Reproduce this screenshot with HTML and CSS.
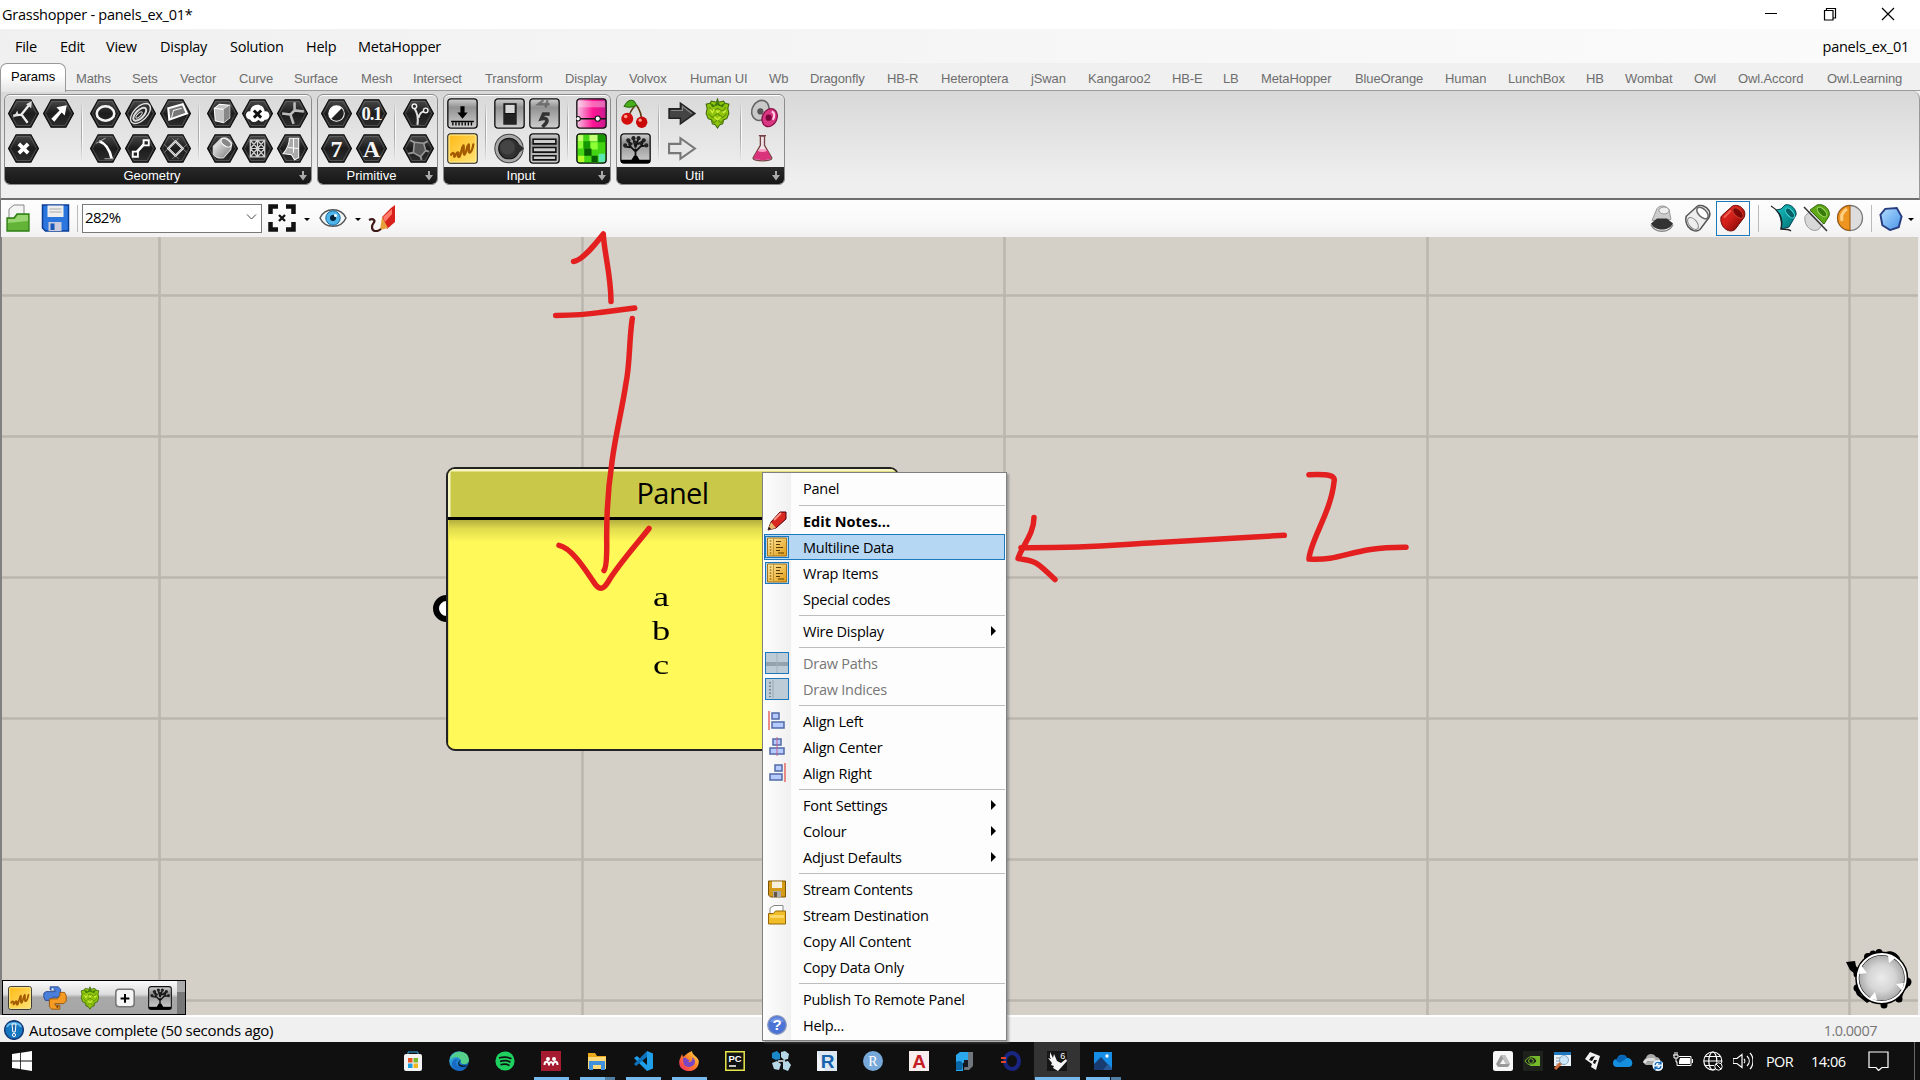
FILE: index.html
```html
<!DOCTYPE html>
<html lang="en">
<head>
<meta charset="utf-8">
<title>Grasshopper - panels_ex_01*</title>
<link rel="stylesheet" href="styles.css">
</head>
<body>
<svg class="defs" width="0" height="0" aria-hidden="true">
  <defs>
    <linearGradient id="gHex" x1="0" y1="0" x2="0" y2="1"><stop offset="0" stop-color="#4a4a4a"/><stop offset=".5" stop-color="#1c1c1c"/><stop offset="1" stop-color="#2e2e2e"/></linearGradient>
    <linearGradient id="gBtn" x1="0" y1="0" x2="0" y2="1"><stop offset="0" stop-color="#d0d0d0"/><stop offset=".3" stop-color="#929292"/><stop offset="1" stop-color="#cfcfcf"/></linearGradient>
    <linearGradient id="gWhite" x1="0" y1="0" x2="1" y2="1"><stop offset="0" stop-color="#fff"/><stop offset="1" stop-color="#777"/></linearGradient>
    <linearGradient id="gYellow" x1="0" y1="0" x2="1" y2="1"><stop offset="0" stop-color="#ffb914"/><stop offset="1" stop-color="#ffe477"/></linearGradient>
    <linearGradient id="gPink" x1="0" y1="0" x2="1" y2="0"><stop offset="0" stop-color="#f4c3e4"/><stop offset=".55" stop-color="#ff1493"/><stop offset="1" stop-color="#c71a8e"/></linearGradient>
    <linearGradient id="gRed" x1="0" y1="0" x2="1" y2="1"><stop offset="0" stop-color="#d22"/><stop offset=".45" stop-color="#d3211a"/><stop offset="1" stop-color="#6a0000"/></linearGradient>
    <linearGradient id="gTeal" x1="0" y1="0" x2="1" y2="1"><stop offset="0" stop-color="#19c4c4"/><stop offset="1" stop-color="#006b70"/></linearGradient>
    <linearGradient id="gBlue" x1="0" y1="0" x2="1" y2="1"><stop offset="0" stop-color="#b4dcff"/><stop offset="1" stop-color="#4795e8"/></linearGradient>
    <linearGradient id="gGold" x1="0" y1="0" x2="1" y2="1"><stop offset="0" stop-color="#ffe9a0"/><stop offset="1" stop-color="#e09a12"/></linearGradient>
    <linearGradient id="gEdge" x1="0" y1="0" x2="1" y2="1"><stop offset="0" stop-color="#41c6df"/><stop offset=".6" stop-color="#1475d0"/><stop offset="1" stop-color="#0d4fa4"/></linearGradient>
    <linearGradient id="gFox" x1="1" y1="0" x2="0" y2="1"><stop offset="0" stop-color="#ffe44a"/><stop offset=".5" stop-color="#ff7b28"/><stop offset="1" stop-color="#f0246b"/></linearGradient>
    <radialGradient id="gKnob"><stop offset="0" stop-color="#ebebeb"/><stop offset=".55" stop-color="#d5d5d5"/><stop offset="1" stop-color="#a3a3a3"/></radialGradient>
    <symbol id="hex" viewBox="0 0 30 30"><path d="M7.8 1.8h14.4L29.5 15l-7.3 13.2H7.8L.5 15z" fill="url(#gHex)" stroke="#0c0c0c"/><path d="M8.6 3.4h12.8L27.6 15l-6.2 11.6H8.6L2.4 15z" fill="none" stroke="#777" stroke-width=".7" opacity=".7"/></symbol>
    <symbol id="btn" viewBox="0 0 30 30"><rect x=".8" y=".8" width="28.4" height="28.4" rx="3" fill="url(#gBtn)" stroke="#111" stroke-width="1.3"/></symbol>
    <symbol id="panel" viewBox="0 0 30 30"><rect x=".8" y=".8" width="28.4" height="28.4" rx="2.5" fill="url(#gYellow)" stroke="#222" stroke-width="1.2"/><rect x="2" y="2" width="26" height="26" rx="1" fill="none" stroke="#ffef9d"/><path d="M4 21c2-3 3-2 3 2 2-1 2-5 4-4 0 2-1 5 1 4 2-3 2-9 4-11 1 3-1 9 1 9 2-2 2-8 4-10 1 3-1 8 1 8 2-1 3-5 3.500-8" fill="none" stroke="#a35a00" stroke-width="2.200" stroke-linejoin="round" stroke-linecap="round"/></symbol>
    <symbol id="tree" viewBox="0 0 30 30"><use href="#btn"/><path d="M1 26h28v3H1z"/><path d="M15 27V15m0 3-6-6m6 6 6-6m-6 2-2-8m2 8 3-9M10 14l-6-1m16 0 6-1M9 12V6m12 6 2-6M12 11L7 8m10 3 5-3" stroke="#111" stroke-width="1.700" fill="none"/><path d="M10.500 27l3-5h3l3 5z"/><g fill="#222"><circle cx="5" cy="12" r="2"/><circle cx="8" cy="7" r="2"/><circle cx="13" cy="5" r="2"/><circle cx="18" cy="5" r="2"/><circle cx="23" cy="7" r="2"/><circle cx="25.500" cy="12" r="2"/><circle cx="15" cy="9" r="1.700"/><circle cx="20" cy="10" r="1.600"/><circle cx="10" cy="11" r="1.600"/></g></symbol>
    <symbol id="hop" viewBox="0 0 30 30"><path d="M15 1l1 3 5-1 1 2 4 1-1 4 1 5-2 5-3 1-1 4-3 1-2 3-2-3-3-1-1-4-3-1-2-5 1-5-1-4 4-1 1-2 5 1z" fill="#8fc40d" stroke="#3c6608"/><path d="M7 9l3 4 5-3 5 3 3-4M6 15l4 4 5-4 5 4 4-4M9 21l3 3 3-3 3 3 3-3" fill="none" stroke="#5c8d06" stroke-width="1"/><path d="M8 11l2 3 2-3m2 1l1 2 2-2m3 1l1 1 2-2M12 18l3 3 3-3" fill="none" stroke="#d3f03c" stroke-width="1.300"/><path d="M7 4l5 3 3-4 3 4 5-3-3 5-5-2-5 2z" fill="#3f7a0b"/></symbol>
    <symbol id="cyl" viewBox="0 0 28 28"><path d="M2.500 11.500L13 2c3-2.500 9-1 12 4 1.200 2.500 1 5 0 7L16 25c-4 3-9 1-12-3-2-3-3-8-1.500-10.500z"/></symbol>
    <symbol id="note" viewBox="0 0 22 20"><path d="M1.500 1h19v18h-19z" fill="url(#gGold)" stroke="#a4721a"/><path d="M7.500 1v18" stroke="#b5862e" stroke-width=".8"/><path d="M4.500 3.500v14" stroke="#6b4200" stroke-width="1.500" stroke-dasharray="1 2"/><path d="M10 4.500h5M10 7.500h4M10 10.500h7M10 13.500h4M12 16h6" stroke="#5a3c00" stroke-width="1.200"/></symbol>
    <symbol id="plus" viewBox="0 0 8 10"><path d="M3 0h2v4h3l-4 5.500L0 4h3z" fill="#aaa"/></symbol>
  </defs>
</svg>

<header class="titlebar">
  <span class="title-text">Grasshopper - panels_ex_01*</span>
  <span class="window-buttons">
    <svg width="14" height="16" viewBox="0 0 14 16"><path d="M1 7.500h12" stroke="#000"/></svg>
    <svg width="14" height="16" viewBox="0 0 14 16"><path d="M1.500 4.500h8.500v9.500H1.500zM3.500 4.500V2.500h9v9.500H10" stroke="#000" stroke-width="1.200" fill="none"/></svg>
    <svg width="14" height="16" viewBox="0 0 14 16"><path d="M1 2l12 12M13 2L1 14" stroke="#000" stroke-width="1.200"/></svg>
  </span>
</header>

<nav class="menubar"><div class="menus"><span>File</span><span>Edit</span><span>View</span><span>Display</span><span>Solution</span><span>Help</span><span>MetaHopper</span></div><span class="doc">panels_ex_01</span></nav>

<nav class="tabs"><b>Params</b><div class="tab-list"><span>Maths</span><span>Sets</span><span>Vector</span><span>Curve</span><span>Surface</span><span>Mesh</span><span>Intersect</span><span>Transform</span><span>Display</span><span>Volvox</span><span>Human UI</span><span>Wb</span><span>Dragonfly</span><span>HB-R</span><span>Heteroptera</span><span>jSwan</span><span>Kangaroo2</span><span>HB-E</span><span>LB</span><span>MetaHopper</span><span>BlueOrange</span><span>Human</span><span>LunchBox</span><span>HB</span><span>Wombat</span><span>Owl</span><span>Owl.Accord</span><span>Owl.Learning</span></div></nav>

<section class="ribbon">
  <div class="group geometry">
    <div class="tools">
      <div class="cells two">
        <svg viewBox="0 0 30 30"><use href="#hex"/><path d="M13 16L21 6M13 16l-8 1M13 16l6 8" stroke="#eee" stroke-width="2.200"/><path d="M23 3l-.5 7-5-4zM9 12l1 4-5 3z" fill="#ddd"/></svg>
        <svg viewBox="0 0 30 30"><use href="#hex"/><path d="M8 20l8-8-3-3 10-2-2 10-3-3-7 9z" fill="#fff"/></svg>
        <svg viewBox="0 0 30 30"><use href="#hex"/><path d="M10.500 10.500l9 9m0-9l-9 9" stroke="#fff" stroke-width="3.600"/></svg>
      </div>
      <i class="split"></i>
      <div class="cells three">
        <svg viewBox="0 0 30 30"><use href="#hex"/><ellipse cx="15" cy="15" rx="8.500" ry="7" fill="none" stroke="#f4f4f4" stroke-width="2.500"/></svg>
        <svg viewBox="0 0 30 30"><use href="#hex"/><g transform="rotate(-45 15 15)" fill="none" stroke="#ddd"><ellipse cx="15" cy="15" rx="12" ry="6.500" stroke-width="1.300"/><ellipse cx="14" cy="15" rx="8" ry="3.800" stroke-width="2"/><ellipse cx="13" cy="15" rx="4" ry="1.500"/></g></svg>
        <svg viewBox="0 0 30 30"><use href="#hex"/><path d="M8 10l14-4 4 9-17 6z" fill="#777" stroke="#fff" stroke-width="2"/><path d="M11 20l2-8 8-2" fill="none" stroke="#eee"/></svg>
        <svg viewBox="0 0 30 30"><use href="#hex"/><path d="M9 8c6 2 10 8 12 17" stroke="#fff" stroke-width="2.600" fill="none"/><path d="M6 10l9-5M14 25h9" stroke="#aaa" fill="none"/></svg>
        <svg viewBox="0 0 30 30"><use href="#hex"/><path d="M10 20L20 9" stroke="#fff" stroke-width="2.600"/><path d="M7.500 18h5v5h-5zM18 7h5v5h-5z" fill="#222" stroke="#fff" stroke-width="1.800"/></svg>
        <svg viewBox="0 0 30 30"><use href="#hex"/><path d="M15 8l7 7-7 7-7-7z" fill="none" stroke="#f0f0f0" stroke-width="2.200"/><path d="M12 5l14 14M18 5L4 19M4 11l14 14M26 11L12 25" stroke="#999" stroke-width=".8"/></svg>
      </div>
      <i class="split"></i>
      <div class="cells three">
        <svg viewBox="0 0 30 30"><use href="#hex"/><path d="M7 10l5-4 10 1v12l-6 5-8-2z" fill="#c4c4c4" stroke="#fff"/><path d="M7 10l9 1 6-4M16 11v13" stroke="#fff" fill="none"/><path d="M16 11l6-4v12l-6 5z" fill="#888"/></svg>
        <svg viewBox="0 0 30 30"><use href="#hex"/><path d="M8 21c-6-1-5-9 0-8 0-8 13-9 14 0 6-1 6 8 0 8-2 3-4 2-6 0-3 3-6 3-8 0z" fill="#fff"/><path d="M11.500 12l7 7m0-7l-7 7" stroke="#111" stroke-width="2.800"/></svg>
        <svg viewBox="0 0 30 30"><use href="#hex"/><path d="M5 15l8 1 3 9M13 16l4-4V4m0 8l9 1" stroke="#bbb" stroke-width="2.500" fill="none" stroke-linejoin="round"/></svg>
        <svg viewBox="0 0 30 30"><use href="#hex"/><path d="M6 13l8-8c4-1 8 1 10 5l-1 6-7 8c-5 1-9-1-10-4z" fill="url(#gWhite)" stroke="#ddd"/><ellipse cx="18.500" cy="9.500" rx="5.500" ry="3.200" transform="rotate(35 18.500 9.500)" fill="#888" stroke="#fff"/></svg>
        <svg viewBox="0 0 30 30"><use href="#hex"/><path d="M8 7h14v16H8zM8 15h14M15 7v16M8 7l14 16M22 7L8 23M15 7l7 8-7 8-7-8z" fill="none" stroke="#d2d2d2" stroke-width="1.200"/></svg>
        <svg viewBox="0 0 30 30"><use href="#hex"/><path d="M12 5h9v19l-4 2-3-5-8-1c4-5 6-9 6-15z" fill="#aaa" stroke="#fff"/><path d="M16 5v14M11 14l10 1" stroke="#fff"/></svg>
      </div>
    </div>
    <footer><span>Geometry</span><svg class="more"><use href="#plus"/></svg></footer>
  </div>

  <div class="group primitive">
    <div class="tools">
      <div class="cells two">
        <svg viewBox="0 0 30 30"><use href="#hex"/><circle cx="15" cy="15" r="8" fill="#fff"/><path d="M20 10a7 7 0 0 1-10 10z" fill="#222"/></svg>
        <svg viewBox="0 0 30 30"><use href="#hex"/><text x="15" y="21.500" class="glyph narrow">0.1</text></svg>
        <svg viewBox="0 0 30 30"><use href="#hex"/><text x="15" y="23" class="glyph">7</text></svg>
        <svg viewBox="0 0 30 30"><use href="#hex"/><text x="15" y="23" class="glyph">A</text></svg>
      </div>
      <i class="split"></i>
      <div class="cells">
        <svg viewBox="0 0 30 30"><use href="#hex"/><path d="M14 26c1-7 0-12-3-16m4 9c1-4 3-6 6-6" fill="none" stroke="#ddd" stroke-width="2"/><circle cx="11" cy="8" r="2.200" fill="#222" stroke="#eee" stroke-width="1.400"/><circle cx="22" cy="12" r="2.200" fill="#222" stroke="#eee" stroke-width="1.400"/></svg>
        <svg viewBox="0 0 30 30"><use href="#hex"/><path d="M11 9l9 1 2 7-5 6-7-4z" fill="#555" stroke="#999" stroke-width="1.500"/><path d="M11 9L7 7m13 3l4-2m-2 9l3 1m-8 5l1 3m-8-7l-5 1" stroke="#999" stroke-width="1.800"/></svg>
      </div>
    </div>
    <footer><span>Primitive</span><svg class="more"><use href="#plus"/></svg></footer>
  </div>

  <div class="group input">
    <div class="tools">
      <div class="cells">
        <svg viewBox="0 0 30 30"><use href="#btn"/><path d="M13 8h4v6h3l-5 6-5-6h3zM4 22h22v1.500H4z"/><path d="M5 25h21" stroke="#000" stroke-width="3" stroke-dasharray="1.300 1.700"/></svg>
        <svg viewBox="0 0 30 30"><use href="#panel"/></svg>
      </div>
      <i class="split"></i>
      <div class="cells two">
        <svg viewBox="0 0 30 30"><use href="#btn"/><path d="M9 5h13v21H9z" fill="#222"/><path d="M10.500 6h10v9h-10z" fill="#d8d8d8" stroke="#111"/></svg>
        <svg viewBox="0 0 30 30"><use href="#btn"/><g fill="none" stroke="#333"><path d="M14 2l-5 4h11M18 2l-2 7" stroke-width="2.300" opacity=".5"/><path d="M20 15.500h-6l-2 4.500c5-1 7 1 4 5l-3 3" stroke-width="3.500"/></g></svg>
        <svg viewBox="0 0 30 30"><circle cx="14.500" cy="15" r="13.700" fill="#aaa" stroke="#444"/><circle cx="14.500" cy="15" r="10" fill="#333" stroke="#111"/><path d="M21 8l8 7-8 7z" fill="#2c2c2c"/><circle cx="13" cy="14" r="7" fill="#555" opacity=".5"/></svg>
        <svg viewBox="0 0 30 30"><use href="#btn"/><g fill="#ccc" stroke="#111" stroke-width="1.500"><path d="M4 6h22v4.500H4zM4 14h22v4.500H4zM4 22h22v4H4z"/></g></svg>
      </div>
      <i class="split"></i>
      <div class="cells">
        <svg viewBox="0 0 30 30"><rect x=".8" y=".8" width="28.400" height="28.400" rx="3" fill="url(#gPink)" stroke="#111" stroke-width="1.300"/><path d="M2 6h26" stroke="#fff" stroke-width="6" opacity=".35"/><path d="M1 20h28" stroke="#111" stroke-width="1.500"/><circle cx="2" cy="20" r="2.200" fill="#fff" stroke="#111"/><circle cx="21" cy="20" r="2.500" fill="#fff" stroke="#111"/></svg>
        <svg viewBox="0 0 30 30"><rect x=".8" y=".8" width="28.400" height="28.400" rx="3" fill="#42d513" stroke="#111" stroke-width="1.300"/><path d="M2 2h5v6H2zM13 2h8v6h-8z" fill="#c7ff79"/><path d="M7 8h7v7H7zM21 2h7v7h-7z" fill="#159800"/><path d="M14 9h7v7h-7zM2 8h5v7H2z" fill="#8eff35"/><path d="M8 15h7v7H8zM15 22h6v6h-6z" fill="#075b00"/><path d="M2 22h6v6H2z" fill="#b4ff29"/><path d="M22 20h6v8h-6z" fill="#5ce8b2"/></svg>
      </div>
    </div>
    <footer><span>Input</span><svg class="more"><use href="#plus"/></svg></footer>
  </div>

  <div class="group util">
    <div class="tools">
      <div class="cells">
        <svg viewBox="0 0 30 30"><path d="M15 7C11 11 9 15 8 20M16 7c3 4 5 9 5 16" stroke="#5b3a12" stroke-width="1.600" fill="none"/><path d="M16 7C13 0 8 1 4 8c5 2 8 1 12-1z" fill="#49ad1c" stroke="#276b0c"/><circle cx="7" cy="20" r="5.800" fill="#d40d0d"/><circle cx="21" cy="23.500" r="5.500" fill="#c90808"/><circle cx="5.500" cy="18" r="1.700" fill="#ff9d8a"/><circle cx="19.500" cy="21.500" r="1.600" fill="#ff9d8a"/></svg>
        <svg viewBox="0 0 30 30"><use href="#tree"/></svg>
      </div>
      <i class="split"></i>
      <div class="cells two">
        <svg viewBox="0 0 30 30"><path d="M2 10.500h11V5l14 10-14 10v-5.500H2z" fill="#444" stroke="#222" stroke-width="1.500"/><path d="M4 12h11V8l9 7" fill="none" stroke="#888"/></svg>
        <svg viewBox="0 0 30 30"><use href="#hop"/></svg>
        <svg viewBox="0 0 30 30"><path d="M2 10.500h11V5l14 10-14 10v-5.500H2z" fill="#e6e6e6" stroke="#777" stroke-width="2"/></svg>
      </div>
      <i class="split"></i>
      <div class="cells">
        <svg viewBox="0 0 30 30"><ellipse cx="11" cy="12" rx="8" ry="10" transform="rotate(25 11 12)" fill="#c9c9c9" stroke="#666" stroke-width="1.500"/><circle cx="11" cy="13" r="3" fill="#555"/><ellipse cx="20" cy="19" rx="7" ry="9" transform="rotate(25 20 19)" fill="#d93782" stroke="#8a114b" stroke-width="1.300"/><circle cx="19" cy="19" r="3" fill="#7b063c"/><path d="M22 13c3 1 3 5 1 8" stroke="#ffd0e5" stroke-width="2" fill="none"/></svg>
        <svg viewBox="0 0 30 30"><path d="M9.500 2.500h7M11 3v9L4 24c-1 4 19 4 18 0l-7-12V3z" fill="#f1e3ea" stroke="#744" stroke-width="1.300"/><path d="M8 17c3 2 7-1 10 0l3.500 7c0 3-17 3-17 0z" fill="#d9347b"/><ellipse cx="13" cy="17" rx="4" ry="1.400" fill="#ff9fc6"/></svg>
      </div>
    </div>
    <footer><span>Util</span><svg class="more"><use href="#plus"/></svg></footer>
  </div>
</section>

<section class="toolbar">
  <svg class="t-open" viewBox="0 0 24 28"><path d="M3 16V5l5-4h10v15z" fill="#f4f4f4" stroke="#888"/><path d="M1 14h7l3-4h12v17H1z" fill="#62b337" stroke="#2e7d14" stroke-width="1.300"/><path d="M2 15h7l3-4h10v6L2 19z" fill="#b1e48d" opacity=".7"/></svg>
  <svg class="t-save" viewBox="0 0 28 28"><path d="M1 1h26v26H4l-3-3z" fill="#2b76de" stroke="#0c3d96" stroke-width="1.500"/><path d="M6 1.500h16V13H6z" fill="#eee"/><path d="M8 5h12M8 8h12" stroke="#aaa"/><path d="M7 18h13v9H7z" fill="#ccd"/><path d="M9 19.500h4V26H9z" fill="#1758b8"/></svg>
  <i class="bar-split"></i>
  <div class="combo"><span>282%</span><svg width="11" height="8" viewBox="0 0 11 8"><path d="M1 1.500l4.500 4.500L10 1.500" stroke="#444" fill="none"/></svg></div>
  <svg class="t-ext" viewBox="0 0 28 28"><path d="M2.500 10V2.500H10M18 2.500h7.500V10M25.500 18v7.500H18M10 25.500H2.500V18" fill="none" stroke="#111" stroke-width="4.500"/><path d="M11 11l6 6m0-6l-6 6" stroke="#111" stroke-width="2.300"/></svg>
  <i class="caret"></i>
  <svg class="t-eye" viewBox="0 0 28 28"><path d="M1 14C6 3 22 3 27 14 22 25 6 25 1 14z" fill="#f2f7fa" stroke="#555" stroke-width="1.500"/><circle cx="14" cy="14" r="7.200" fill="#4fb5e8" stroke="#176b9e"/><circle cx="14" cy="14" r="3" fill="#05233b"/><circle cx="16.500" cy="11.500" r="1.500" fill="#fff"/></svg>
  <i class="caret"></i>
  <svg class="t-pen" viewBox="0 0 28 28"><path d="M14 13L23 4l4-3v17l-8 7z" fill="#d8211a"/><path d="M15 13l9-8v5l-7 8z" fill="#ff7b69"/><path d="M12 26l2-13 6 11z" fill="#e8a03b"/><path d="M13 25c-5 4-9 2-9-2 0-4 4-5 2-7-1-1-3-1-5 0" fill="none" stroke="#3f1818" stroke-width="2.200"/></svg>
  <div class="display-modes">
    <svg viewBox="0 0 28 28"><path d="M4 16l5-12c3-4 9-3 12 1l2 10z" fill="#ccc" stroke="#999"/><ellipse cx="16" cy="6" rx="5" ry="3.500" fill="#eee" stroke="#999"/><path d="M3 19l6-5h10l6 5c-4 8-18 8-22 0z" fill="#333"/><path d="M3 20c4 9 18 9 22 0" fill="none" stroke="#888" stroke-width="1.500"/></svg>
    <svg viewBox="0 0 28 28"><use href="#cyl" fill="#eee" stroke="#555" stroke-width="1.500"/><ellipse cx="18.500" cy="8.500" rx="7" ry="4" transform="rotate(45 18.500 8.500)" fill="#fff" stroke="#666" stroke-width="1.500"/><ellipse cx="9" cy="19" rx="7" ry="4" transform="rotate(50 9 19)" fill="none" stroke="#888"/></svg>
    <span class="chosen"><svg viewBox="0 0 28 28"><use href="#cyl" fill="url(#gRed)" stroke="#6d0906"/><ellipse cx="19" cy="8.500" rx="6.500" ry="3.500" transform="rotate(45 19 8.500)" fill="#790807" stroke="#c8392c"/><path d="M5 13l7-7" stroke="#f0604e" stroke-width="2"/></svg></span>
  </div>
  <i class="bar-split"></i>
  <div class="preview-modes">
    <svg viewBox="0 0 28 28"><path d="M6 6l5-1 4-4c6-2 12 5 11 10l-7 12-8 2c1-7 0-13-5-19z" fill="url(#gTeal)" stroke="#045"/><ellipse cx="20" cy="9" rx="6" ry="3" transform="rotate(50 20 9)" fill="#055f65" stroke="#45dad7"/><path d="M1 2c10 6 12 15 10 23 4 0 8 0 10 2" fill="none" stroke="#222" stroke-width="1.300"/></svg>
    <svg viewBox="0 0 28 28"><use href="#cyl" fill="#d8d8d8" stroke="#999"/><path d="M7 6l7-5c7-2 14 5 12 11l-5 8z" fill="#5fa917" stroke="#376c0b"/><ellipse cx="19" cy="8" rx="6" ry="3" transform="rotate(45 19 8)" fill="#397a0c" stroke="#a4d86a"/><path d="M1 3l23 24" stroke="#333" stroke-width="1.500"/></svg>
    <svg viewBox="0 0 28 28"><ellipse cx="14" cy="14" rx="12.500" ry="12.500" fill="#ddd" stroke="#777" stroke-width="1.300"/><path d="M14 1.500a12.500 12.500 0 0 0 0 25z" fill="#ee9420" stroke="#9c5306"/><path d="M11 5c-5 3-6 8-5 12" stroke="#ffd186" stroke-width="3" fill="none"/></svg>
  </div>
  <i class="bar-split"></i>
  <svg class="t-gem" viewBox="0 0 24 26"><path d="M6 3l12-1 5 9-3 11-9 3-8-5L1 9z" fill="url(#gBlue)" stroke="#273d80" stroke-width="2"/></svg>
  <i class="caret last"></i>
</section>

<main class="canvas">
  <svg class="grid-lines" viewBox="0 237 1920 779" width="1920" height="779"><path d="M159.500 237v779M582.500 237v779M1004.500 237v779M1427.500 237v779M1849.500 237v779M0 295.500h1920M0 436.500h1920M0 577.500h1920M0 718.500h1920M0 859.500h1920M0 1000.500h1920" stroke="#bbb7af" stroke-width="2.600"/></svg>
  <i class="port"></i>
  <article class="panel-node"><h1>Panel</h1><div class="values"><pre>a
b
c</pre></div></article>
  <div class="palette">
    <svg viewBox="0 0 30 30"><use href="#panel"/></svg>
    <svg viewBox="0 0 30 30"><path d="M9 1h10l3 3v10H12l-3 4H3l-2-4V9l3-2h11V5H9z" fill="#4b7fdc" stroke="#1c3c87"/><path d="M21 29H11l-3-3V16h10l3-4V8h6l2 4v7l-3 3H15v2h6z" fill="#f59a22" stroke="#8b4b00"/><circle cx="12" cy="4" r="1.300" fill="#fff"/><circle cx="18" cy="26" r="1.300" fill="#5c2d00"/></svg>
    <svg viewBox="0 0 30 30"><use href="#hop"/></svg>
    <svg viewBox="0 0 30 30"><rect x="3.500" y="4" width="23" height="22" rx="4" fill="#f5f5f5" stroke="#777" stroke-width="2"/><path d="M15 10v11M9.500 15.500h11" stroke="#000" stroke-width="2.500"/></svg>
    <svg viewBox="0 0 30 30"><use href="#tree"/></svg>
    <i class="grip"></i>
  </div>
  <svg class="compass" viewBox="0 0 70 64" width="70" height="64">
    <path d="M3 17l9-1 1 5 3 4-4 4-5-4z"/>
    <g><circle cx="14" cy="29" r="3.500"/><circle cx="25" cy="12" r="4"/><circle cx="30" cy="9" r="3.500"/><circle cx="36" cy="7.500" r="3.500"/><path d="M43 7c5-2 11 1 14 6l-1 4-12-7z"/><circle cx="64" cy="37" r="4.500"/><path d="M61 46l4-4 0-4-3-3-3 12-5 8 4 1z"/><circle cx="56" cy="54" r="3.500"/><circle cx="41" cy="60" r="3.500"/><path d="M11 43l3-6 4 13 9 6-3 2-5-4-5-4z"/><circle cx="14" cy="43" r="3.500"/></g>
    <circle cx="38.700" cy="33" r="24.500" fill="url(#gKnob)" stroke="#000" stroke-width="4"/>
    <circle cx="38.700" cy="33" r="24" fill="none" stroke="#fff" stroke-width="2"/>
    <path d="M45 10l7 3-6 5zM17 19l7 9-8 1zM61 38l-8 1 6 6zM26 54l6-7 2 8z" fill="#fff"/>
  </svg>
</main>

<footer class="statusbar"><svg width="20" height="20" viewBox="0 0 20 20"><circle cx="10" cy="10" r="9.300" fill="#1577c0" stroke="#173a77" stroke-width="1.500"/><path d="M3 7c2-5 12-5 14 0" stroke="#61bdf1" stroke-width="2" fill="none"/><path d="M8 4h4l-.8 8H8.800z" fill="#276aa8" stroke="#fff"/><circle cx="10" cy="15" r="1.600" fill="#276aa8" stroke="#fff"/></svg><span class="message">Autosave complete (50 seconds ago)</span><span class="version">1.0.0007</span></footer>

<footer class="taskbar">
  <svg class="start" width="20" height="20" viewBox="0 0 20 20"><path d="M0 3l8.200-1.200v7.700H0zM9 1.700L20 0v9.500H9zM0 10.400h8.200v7.700L0 17zM9 10.400h11V20L9 18.300z" fill="#fff"/></svg>
  <div class="apps">
    <span><svg viewBox="0 0 20 20"><path d="M5 4V1h10v3" fill="none" stroke="#35a9e8"/><rect x="1" y="3" width="18" height="17" rx="2" fill="#f3f3f3"/><path d="M5 7h4.500v4.500H5z" fill="#e85425"/><path d="M10.500 7H15v4.500h-4.500z" fill="#7bb82b"/><path d="M5 12.500h4.500V17H5z" fill="#1b9ee0"/><path d="M10.500 12.500H15V17h-4.500z" fill="#f5b51f"/></svg></span>
    <span><svg viewBox="0 0 20 20"><circle cx="10" cy="10" r="9.800" fill="url(#gEdge)"/><path d="M2 6C6-2 20-1 20 9c0 6-10 5-8 1C11 6 5 4 1 9z" fill="#55cf8a"/><path d="M8 9c-3 5 2 10 9 8-5 6-15 2-14-5 1-4 4-5 6-4z" fill="#1a69c2"/><path d="M12 9c-4 3-1 7 7 5-5 4-12 1-9-4z" fill="#111"/></svg></span>
    <span><svg viewBox="0 0 20 20"><circle cx="10" cy="10" r="9.600" fill="#1ed05f"/><path d="M4 7c5-1.500 9-1 12.500.8M5 10.500c4-1.200 8-.8 10.500.8M5.500 13.700c4-1 6.500-.6 9 .8" fill="none" stroke="#111" stroke-width="1.700"/></svg></span>
    <span class="run"><svg viewBox="0 0 20 20"><path d="M0 0h20v20H0z" fill="#a51c30"/><circle cx="7" cy="8" r="2" fill="#fff"/><circle cx="13" cy="8" r="2" fill="#fff"/><path d="M3.500 14c0-4 3-4 4-1.500M16.500 14c0-4-3-4-4-1.500M8 14.500V12l2-1 2 1v2.500" fill="none" stroke="#fff" stroke-width="2"/></svg></span>
    <span class="run many"><svg viewBox="0 0 20 20"><path d="M1 2h7l2 3h9v12H1z" fill="#e9a91b"/><path d="M1 6h18v12H1z" fill="#ffd978"/><path d="M2 19v-9h16v9h-4v-5H6v5z" fill="#3f91dc"/></svg></span>
    <span class="run"><svg viewBox="0 0 20 20"><path d="M14 0l6 2.500v15L14 20 1 7l3-2 10 9z" fill="#219ee8"/><path d="M14 0v6L3 15l-2-2z" fill="#0b72bb"/></svg></span>
    <span class="run"><svg viewBox="0 0 20 20"><path d="M9 2l4-2c0 4 5 5 6.500 9C21 15 16 20 10 20S-1 16 .5 9L3 3l1 3z" fill="url(#gFox)"/><path d="M4 7c4-2 3 2 7 2l-2 2c4 1 5-3 4-5 6 4 2 10-3 10S4 12 4 7z" fill="#7947c4"/></svg></span>
    <span><svg viewBox="0 0 20 20"><path d="M.8.8h18.400v18.400H.8z" fill="#111" stroke="#e7e74c" stroke-width="1.500"/><text x="10" y="11" class="app-pc">PC</text><path d="M4 15h7" stroke="#fff" stroke-width="1.500"/></svg></span>
    <span><svg viewBox="0 0 20 20"><path d="M1 2l5-2 3 3v5l-4 1-4-2z" fill="#1b88c9"/><path d="M10 1l4-1 4 3-1 5-4 1-3-3zM1 12l5-2 4 3-2 6-5-1zM12 11l5-1 3 4-3 6-5-2z" fill="#b6d8e6"/><path d="M7 10h7" stroke="#e5f4fa" stroke-width="1.500"/></svg></span>
    <span><svg viewBox="0 0 20 20"><path d="M0 0h20v20H0z" fill="#dce7f2"/><path d="M0 0l8 20H0z" fill="#fff" opacity=".6"/><text x="10.500" y="17" class="app-r">R</text></svg></span>
    <span><svg viewBox="0 0 20 20"><circle cx="10" cy="10" r="10" fill="#76a8da"/><text x="10" y="15" class="app-rs">R</text></svg></span>
    <span><svg viewBox="0 0 20 20"><path d="M0 0h20v20H0z" fill="#f8eeee"/><text x="10" y="17" class="app-a">A</text></svg></span>
    <span><svg viewBox="0 0 20 20"><path d="M11 1h7v14l-4 4H9z" fill="#6f767d"/><path d="M1 4l4-3h8v10l-5 1v8H1z" fill="#2aa7ed"/><path d="M1 11c3-2 6-1 7 2l-1 6H1z" fill="#0766a5"/><path d="M9 9h4v7H9z" fill="#151a20"/></svg></span>
    <span><svg viewBox="0 0 20 20"><ellipse cx="11" cy="10" rx="7" ry="8" fill="none" stroke="#192681" stroke-width="4"/><path d="M0 7h5M0 11h5" stroke="#e14525" stroke-width="1.800"/></svg></span>
    <span class="run active"><svg viewBox="0 0 20 20"><path d="M0 0h20v20H0z" fill="#151515"/><path d="M0 1l3 5V1l3 6 1-4 3 7 4 2 5-4 1 2-9 10-5-3 1-2-3-1 1-2-4-5 3 1z" fill="#f5f5f5"/><text x="15.500" y="8" class="app-six">6</text></svg></span>
    <span class="run many"><svg viewBox="0 0 20 20"><path d="M1 1h18v18H1z" fill="#168ee7"/><path d="M1 19V13l7-7 11 12v1z" fill="#183b70"/><path d="M10 19l5-6 4 4v2z" fill="#275b9b"/><circle cx="14" cy="5" r="1.700" fill="#fff"/></svg></span>
  </div>
  <div class="tray">
    <span><svg viewBox="0 0 20 20"><rect width="20" height="20" rx="2.500" fill="#f7f7f7"/><path d="M8 4h4l5 9-2 3H5l-2-3z" fill="#999"/><path d="M10 8l3 5H7z" fill="#f7f7f7"/><path d="M12 4l5 9h-4L8 4z" fill="#c2c2c2"/></svg></span>
    <span><svg viewBox="0 0 20 20"><path d="M0 0h20v20H0z" fill="#1f211c"/><path d="M7 5h10v10H7z" fill="#75b92b"/><path d="M2 10c4-6 9-5 12 0-4 5-9 5-12 0z" fill="#1f211c" stroke="#75b92b"/><circle cx="8" cy="10" r="2.400" fill="none" stroke="#75b92b"/></svg></span>
    <span><svg viewBox="0 0 20 20"><path d="M1 1h17v14H1z" fill="#eaf3f8"/><path d="M1 1h17v3H1z" fill="#1d78bd"/><path d="M3 7h12M3 10h12M3 13h9" stroke="#8b9ba5"/><path d="M8 12l-6 6" stroke="#cc6b35" stroke-width="3"/><circle cx="11" cy="9" r="4.500" fill="#cceaff" opacity=".85" stroke="#7b9db5"/></svg></span>
    <span><svg viewBox="0 0 20 20"><path d="M7 1l10 4-4 14-5-3 1-3-7-5z" fill="#f2f2f2"/><path d="M8 6l4-1-3 5-3-1zM11 9l3 0-2 4-2-1z" fill="#111"/></svg></span>
    <span><svg viewBox="0 0 20 20"><path d="M4 16a4 4 0 0 1 0-8C5 3 12 2 14 7c5-1 8 8 2 9z" fill="#1490df"/><path d="M4 8c2-5 9-5 10-1l-7 5-5-3z" fill="#0864b5"/></svg></span>
    <span><svg viewBox="0 0 20 20"><path d="M3 14a4 4 0 0 1 0-7c1-5 8-5 10-1 4 0 6 5 3 8z" fill="#aaa"/><path d="M1 12c3-6 8-2 11-4" stroke="#ddd" stroke-width="3"/><circle cx="15" cy="14.500" r="5.500" fill="#eef7ff"/><path d="M12 14c1-4 5-3 6-1m0-3v3h-3M18 15c-1 4-5 3-6 1m0 3v-3h3" fill="none" stroke="#0b63b5" stroke-width="1.200"/></svg></span>
    <span><svg viewBox="0 0 20 20"><path d="M6 5.500h12v9H4v-4M19.500 8v4" fill="none" stroke="#fff"/><path d="M7 7h10v6H6v-3z" fill="#fff"/><path d="M0 4h5v3H1V4M2 1v3M4 1v3M3 7v4h1" stroke="#fff" fill="none"/></svg></span>
    <span><svg viewBox="0 0 20 20"><g fill="none" stroke="#fff" stroke-width="1.200"><circle cx="9.800" cy="10" r="9"/><ellipse cx="9.800" cy="10" rx="4" ry="9"/><path d="M1 10h18M2 5.500h15.500M2 14.500h10"/></g><circle cx="15.500" cy="15.500" r="4.500" fill="#111"/><circle cx="15.500" cy="15.500" r="3.700" fill="none" stroke="#fff"/><path d="M13 13l5 5" stroke="#fff"/></svg></span>
    <span><svg viewBox="0 0 20 20"><g fill="none" stroke="#fff" stroke-width="1.200"><path d="M0 7.500h4L9 3.500v13l-5-4H0z"/><path d="M11 8c1 1 1 3 0 4M14 5c3 3 3 7 0 10M17 2c4 4 4 12 0 16"/></g></svg></span>
  </div>
  <span class="lang">POR</span><span class="clock">14:06</span>
  <svg class="notif" width="22" height="20" viewBox="0 0 22 20"><path d="M1 1h19v15.500h-6L10.500 19.500 8 16.500H1z" fill="none" stroke="#fff" stroke-width="1.200"/></svg>
  <i class="peek"></i>
</footer>

<svg class="ink" width="1920" height="1080" viewBox="0 0 1920 1080">
  <path d="M573.500 261.500C583 260.500 596 243 603.300 234 604 252 611 275 611 301.500"/>
  <path d="M555.700 315.500C584 315 590 314 600 312.500L634.700 308"/>
  <path d="M632.300 318.500C629 340 630 364 626 383 622 410 615 437 612 462 608 488 606.500 515 606.700 540 607 560 606 568 604 570.500"/>
  <path d="M559 545.400C572 548 586 571 593 581 599 591 603 590 608 582 618 565 637 544 649 528.500"/>
  <path d="M1309 474.700C1328 474 1336 475 1334 482 1331 512 1310 541 1309 559 1345 561 1350 547 1406 547.300"/>
  <path d="M1021 547.700C1100 548 1110 545 1150 543L1284.300 535.300"/>
  <path d="M1034 517.500C1034 534 1022 546 1018 558.500 1034 561 1034 559 1055 579.500"/>
</svg>

<aside class="context">
  <div class="item first">Panel</div><hr>
  <div class="item strong"><svg viewBox="0 0 20 20"><path d="M1 19l3-8L13 1h6v7L9 17z" fill="#d92820" stroke="#501"/><path d="M1 19l3-8 5 6z" fill="#e6b66b"/><path d="M1 19l1-3 2 2z"/><path d="M7 9l7-7" stroke="#ff9485" stroke-width="2"/></svg>Edit Notes...</div>
  <div class="item hot"><svg class="check" viewBox="0 0 22 20"><use href="#note"/></svg>Multiline Data</div>
  <div class="item"><svg class="check" viewBox="0 0 22 20"><use href="#note"/></svg>Wrap Items</div>
  <div class="item">Special codes</div><hr>
  <div class="item sub">Wire Display</div><hr>
  <div class="item off"><svg class="check" viewBox="0 0 22 20"><path d="M0 0h22v20H0z" fill="#bccbd5"/><path d="M0 9h22v4H0z" fill="#94a2ad"/><path d="M11 0v20" stroke="#a2b0ba"/></svg>Draw Paths</div>
  <div class="item off"><svg class="check" viewBox="0 0 22 20"><path d="M0 0h22v20H0z" fill="#bccbd5"/><path d="M4 3v15" stroke="#75818b" stroke-width="2" stroke-dasharray="1.500 2"/><path d="M7 1v18" stroke="#9baab5"/></svg>Draw Indices</div><hr>
  <div class="item"><svg viewBox="0 0 20 20"><path d="M2 0v19" stroke="#e4685f" stroke-width="1.500"/><path d="M5 2h7v6H5zM5 11h12v6H5z" fill="#b6cbff" stroke="#5269a5" stroke-width="1.500"/></svg>Align Left</div>
  <div class="item"><svg viewBox="0 0 20 20"><path d="M6 2h8v6H6zM3 11h14v6H3z" fill="#b6cbff" stroke="#5269a5" stroke-width="1.500"/><path d="M10 0v19" stroke="#c4618e"/></svg>Align Center</div>
  <div class="item"><svg viewBox="0 0 20 20"><path d="M18 0v19" stroke="#e4685f" stroke-width="1.500"/><path d="M8 2h7v6H8zM3 11h12v6H3z" fill="#b6cbff" stroke="#5269a5" stroke-width="1.500"/></svg>Align Right</div><hr>
  <div class="item sub">Font Settings</div>
  <div class="item sub">Colour</div>
  <div class="item sub">Adjust Defaults</div><hr>
  <div class="item"><svg viewBox="0 0 20 20"><path d="M1.500 2h17v16h-15l-2-2z" fill="#d39b18" stroke="#7e5302"/><path d="M5 2.500h10V9H5z" fill="#f5efdc"/><path d="M6 12h8v6H6z" fill="#aaa"/><path d="M7 13h3v5H7z" fill="#654"/></svg>Stream Contents</div>
  <div class="item"><svg viewBox="0 0 20 20"><path d="M3 12V3l4-2.500h9V12z" fill="#fff" stroke="#888"/><path d="M1.500 8.500h5l2-2.500h10v13h-17z" fill="#f0bd28" stroke="#966808"/><path d="M3 10h14v3H3z" fill="#ffe583" opacity=".7"/></svg>Stream Destination</div>
  <div class="item">Copy All Content</div>
  <div class="item">Copy Data Only</div><hr>
  <div class="item">Publish To Remote Panel</div>
  <div class="item"><svg viewBox="0 0 20 20"><circle cx="10" cy="10" r="9.300" fill="#4b73d5" stroke="#8b9abd" stroke-width="1.300"/><path d="M3 7c2-6 12-6 14 0" fill="#8ea9ee" opacity=".6"/><text x="10" y="15" class="q">?</text></svg>Help...</div>
</aside>
</body>
</html>
```
FILE: styles.css
```css
* { box-sizing: border-box; }
body {
  margin: 0; width: 1920px; height: 1080px; overflow: hidden; position: relative;
  display: flex; flex-direction: column;
  background: #f0f0f0; color: #000;
  font: 14.5px "Open Sans", "Noto Sans", sans-serif; letter-spacing: -.26px;
}
svg { display: block; flex: none; }
.defs { position: absolute; }
i { flex: none; }

.titlebar { height: 29px; background: #fff; display: flex; align-items: center; justify-content: space-between; padding: 0 25px 1px 2px; }
.window-buttons { display: flex; gap: 44.5px; }

.menubar { height: 34px; background: linear-gradient(90deg, #f0f0f0, #fbfbfb); display: flex; align-items: center; justify-content: space-between; padding: 0 11px 0 15px; }
.menus { display: grid; grid-template-columns: 45px 46px 54px 70px 76px 52px auto; }

.tabs { height: 28px; display: flex; font: 13px "Liberation Sans", Arial, sans-serif; letter-spacing: -.12px; background: #f0f0f0; }
.tabs b { width: 66px; height: 29px; font-weight: 400; text-align: center; line-height: 26px; border: 1px solid #999; border-bottom: 0; border-radius: 7px 7px 0 0; background: linear-gradient(#fff 40%, #e4e4e4); position: relative; z-index: 1; }
.tab-list { display: grid; flex: 1; padding-left: 10px; line-height: 31px; color: #6e6e6e; border-bottom: 1px solid #9b9b9b; white-space: nowrap;
  grid-template-columns: 56px 48px 59px 55px 67px 52px 72px 80px 64px 61px 79px 41px 77px 54px 90px 57px 84px 51px 38px 94px 90px 63px 78px 39px 69px 44px 89px 80px; }

.ribbon { height: 109px; display: flex; align-items: flex-start; gap: 5px; padding: 3px 0 0 4px; background: linear-gradient(#d8d8d8, #efefef 85%); border: 1px solid #999; border-width: 0 1px 2px; border-bottom-color: #6f6f6f; border-radius: 0 8px 0 0; }
.group { height: 91px; border: 1px solid #8c8c8c; border-radius: 6px; overflow: hidden; background: linear-gradient(#d9d9d9, #f2f2f2); display: flex; flex-direction: column; box-shadow: inset 0 1px #fff; }
.geometry { width: 308px; margin-left: -1px; }
.primitive { width: 121px; }
.input { width: 168px; }
.util { width: 169px; }
.tools { height: 72px; display: flex; padding: 1px 0 0 1px; }
.cells { display: grid; grid-template: 35px 35px / 35px; place-items: center; }
.cells.two { grid-template-columns: 35px 35px; }
.cells.three { grid-template-columns: 35px 35px 35px; }
.cells svg { width: 31px; height: 31px; }
.split { width: 2px; margin: 5px; background: linear-gradient(90deg, #aaa 50%, #fafafa 50%); -webkit-mask-image: linear-gradient(transparent, #000 30%, #000 60%, transparent); mask-image: linear-gradient(transparent, #000 30%, #000 60%, transparent); }
.group footer { flex: 1; display: grid; grid-template-columns: 1fr 10px; padding: 0 2px 0 0; align-items: center; text-align: center; background: linear-gradient(#292929, #171717); color: #fff; font: 13px "Liberation Sans", Arial, sans-serif; letter-spacing: 0; line-height: 16px; }
.more { width: 8px; height: 10px; }
.glyph { font: bold 23px "Liberation Serif", serif; fill: #f5f5f5; text-anchor: middle; letter-spacing: 0; }
.glyph.narrow { font-size: 18px; letter-spacing: -1px; }

.toolbar { height: 37px; display: flex; align-items: center; padding: 0 6px 1px 5px; background: linear-gradient(#fdfdfd, #fafafa 50%, #f1f1f1); border-left: 1px solid #777; }
.t-open { width: 24px; height: 28px; margin-right: 11px; }
.t-save { width: 29px; height: 28px; }
.bar-split { width: 1px; height: 27px; background: #bbb; }
.t-save + .bar-split { margin: 0 4px 0 7px; }
.combo { width: 180px; height: 29px; border: 1px solid #7a7a7a; background: #fff; display: flex; align-items: center; justify-content: space-between; padding: 0 4px 2px 2px; font-size: 15px; letter-spacing: -.7px; }
.t-ext { width: 28px; height: 28px; margin: 0 8px 0 6px; }
.caret { border: 3px solid transparent; border-top: 3.500px solid #000; border-bottom: 0; margin-top: 2px; }
.t-eye { width: 28px; height: 28px; margin: 0 8px 0 9px; }
.t-pen { width: 28px; height: 28px; margin-left: 7px; }
.display-modes { margin-left: auto; display: flex; align-items: center; gap: 4px; padding-right: 8px; }
.display-modes svg { width: 28px; height: 29px; }
.display-modes > svg:first-child { margin-right: 4px; }
.chosen { width: 34px; height: 35px; border: 1px solid #1b78bd; display: grid; place-items: center; }
.preview-modes { display: flex; gap: 5px; padding: 0 7px 0 11px; }
.preview-modes svg { width: 28px; height: 28px; }
.t-gem { width: 24px; height: 25px; margin-left: 7px; }
.caret.last { margin-left: 5px; }

.canvas { height: 778px; position: relative; background: #d4d0c8; border-left: 2px solid #808080; border-right: 2px solid #eee; overflow: hidden; }
.grid-lines { position: absolute; left: -2px; top: 0; }
.port { position: absolute; left: 431px; top: 358px; width: 27px; height: 27px; border: 6px solid #000; border-radius: 50%; background: #fff; }
.panel-node { position: absolute; left: 444px; top: 230px; width: 453px; height: 283.500px; border: 2.500px solid #222; border-radius: 9px; background: #fff959; overflow: hidden; }
.panel-node h1 { margin: 0; height: 51px; border-bottom: 3px solid #000; background: #cac848; box-shadow: inset 2.500px 2.500px #f7f5c1; color: #000; font-size: 29px; font-weight: 400; line-height: 48px; text-align: center; letter-spacing: -.6px; }
.values { display: grid; justify-content: center; align-content: start; padding: 60px 24px 0 0; height: 231px; background: linear-gradient(#b3af3e, #e1dc4e 9px, transparent 22px); box-shadow: inset 1px -1px #dfdb55; }
.values pre { margin: 0; font: 28px "Liberation Serif", serif; line-height: 34px; letter-spacing: 0; text-align: center; transform: scaleX(1.3); }
.palette { position: absolute; left: 0; bottom: 0; width: 184px; height: 35px; border: 1px solid #000; background: linear-gradient(#fafafa, #ddd 40%, #a9a9a9 50%, #a5a5a5); display: flex; align-items: center; padding-left: 5px; gap: 11px; }
.palette svg { width: 24px; height: 24px; }
.grip { width: 8px; height: 33px; background: linear-gradient(#aaa 33%, #777 33%); margin-left: auto; }
.palette svg:nth-last-child(2) { margin-right: -11px; }
.compass { position: absolute; left: 1841px; top: 708px; }

.statusbar { height: 27px; border-top: 2px solid #fff; background: #f0f0f0; display: flex; align-items: center; gap: 5px; padding: 1px 43px 0 4px; }
.message { font-size: 15px; letter-spacing: -.29px; }
.version { margin-left: auto; color: #777; letter-spacing: -.5px; }

.taskbar { height: 38px; background: #101010; display: flex; align-items: center; color: #fff; padding-left: 12px; position: relative; z-index: 3; }
.apps { display: flex; margin-left: 358px; }
.apps span { width: 46px; height: 38px; display: grid; place-items: center; background-repeat: no-repeat; background-position: 50% 100%; }
.apps svg { width: 20px; height: 20px; }
.apps .run { background-image: linear-gradient(#76b9ed, #76b9ed); background-size: 35px 3px; }
.apps .many { background-image: linear-gradient(90deg, #76b9ed 70%, #101010 70%, #101010 72%, #517fa4 72%); }
.apps .active { background-color: #333; background-size: 45px 3px; }
.app-pc { font: bold 9.500px "Liberation Sans", sans-serif; fill: #fff; text-anchor: middle; letter-spacing: 0; }
.app-r { font: bold 19px "Liberation Sans", sans-serif; fill: #1763ad; text-anchor: middle; letter-spacing: 0; }
.app-rs { font: 14px "Liberation Serif", serif; fill: #fff; text-anchor: middle; letter-spacing: 0; }
.app-a { font: bold 19px "Liberation Sans", sans-serif; fill: #c51c26; text-anchor: middle; letter-spacing: 0; }
.app-six { font: 9px "Liberation Sans", sans-serif; fill: #fff; text-anchor: middle; }
.tray { display: flex; margin-left: 362px; }
.tray span { width: 30px; display: grid; place-items: center; }
.tray svg { width: 20px; height: 20px; }
.lang { width: 45px; margin-left: 8px; letter-spacing: -.6px; }
.clock { width: 57px; letter-spacing: -.5px; }
.peek { margin-left: auto; margin-right: 5px; width: 1px; height: 38px; background: #666; }

.ink { position: absolute; left: 0; top: 0; pointer-events: none; fill: none; stroke: #e3201f; stroke-width: 5.500; stroke-linecap: round; stroke-linejoin: round; }

.context { position: absolute; left: 762px; top: 472px; width: 245px; height: 569px; z-index: 4; padding: 3px 1px 0; border: 1px solid #808080; background: linear-gradient(90deg, #fdfdfd, #f0f0f0 28px, #fdfdfd 28px); box-shadow: 2px 2px 2px #6668; }
.item { height: 26px; position: relative; display: flex; align-items: center; padding: 0 0 0 39px; white-space: nowrap; }
.item.first { margin-bottom: 1px; padding-bottom: 2px; }
.context hr { margin: 3px 0 2px 35px; border: 0; height: 1px; background: #bdbdbd; }
.item svg { position: absolute; left: 3px; top: 3px; width: 20px; height: 20px; }
.item .check { left: 1px; top: 2px; width: 24px; height: 22px; border: 1px solid #1b78bd; background: #b5d7f3; }
.strong { font-weight: 700; letter-spacing: 0; }
.hot { background: #b5d7f3; box-shadow: inset 0 0 0 1px #1b78bd; }
.off { color: #777; }
.sub::after { content: ""; margin-left: auto; margin-right: 9px; border: 5px solid transparent; border-left-color: #000; border-right: 0; }
.q { font: bold 15px "Liberation Sans", sans-serif; fill: #fff; text-anchor: middle; }
```
